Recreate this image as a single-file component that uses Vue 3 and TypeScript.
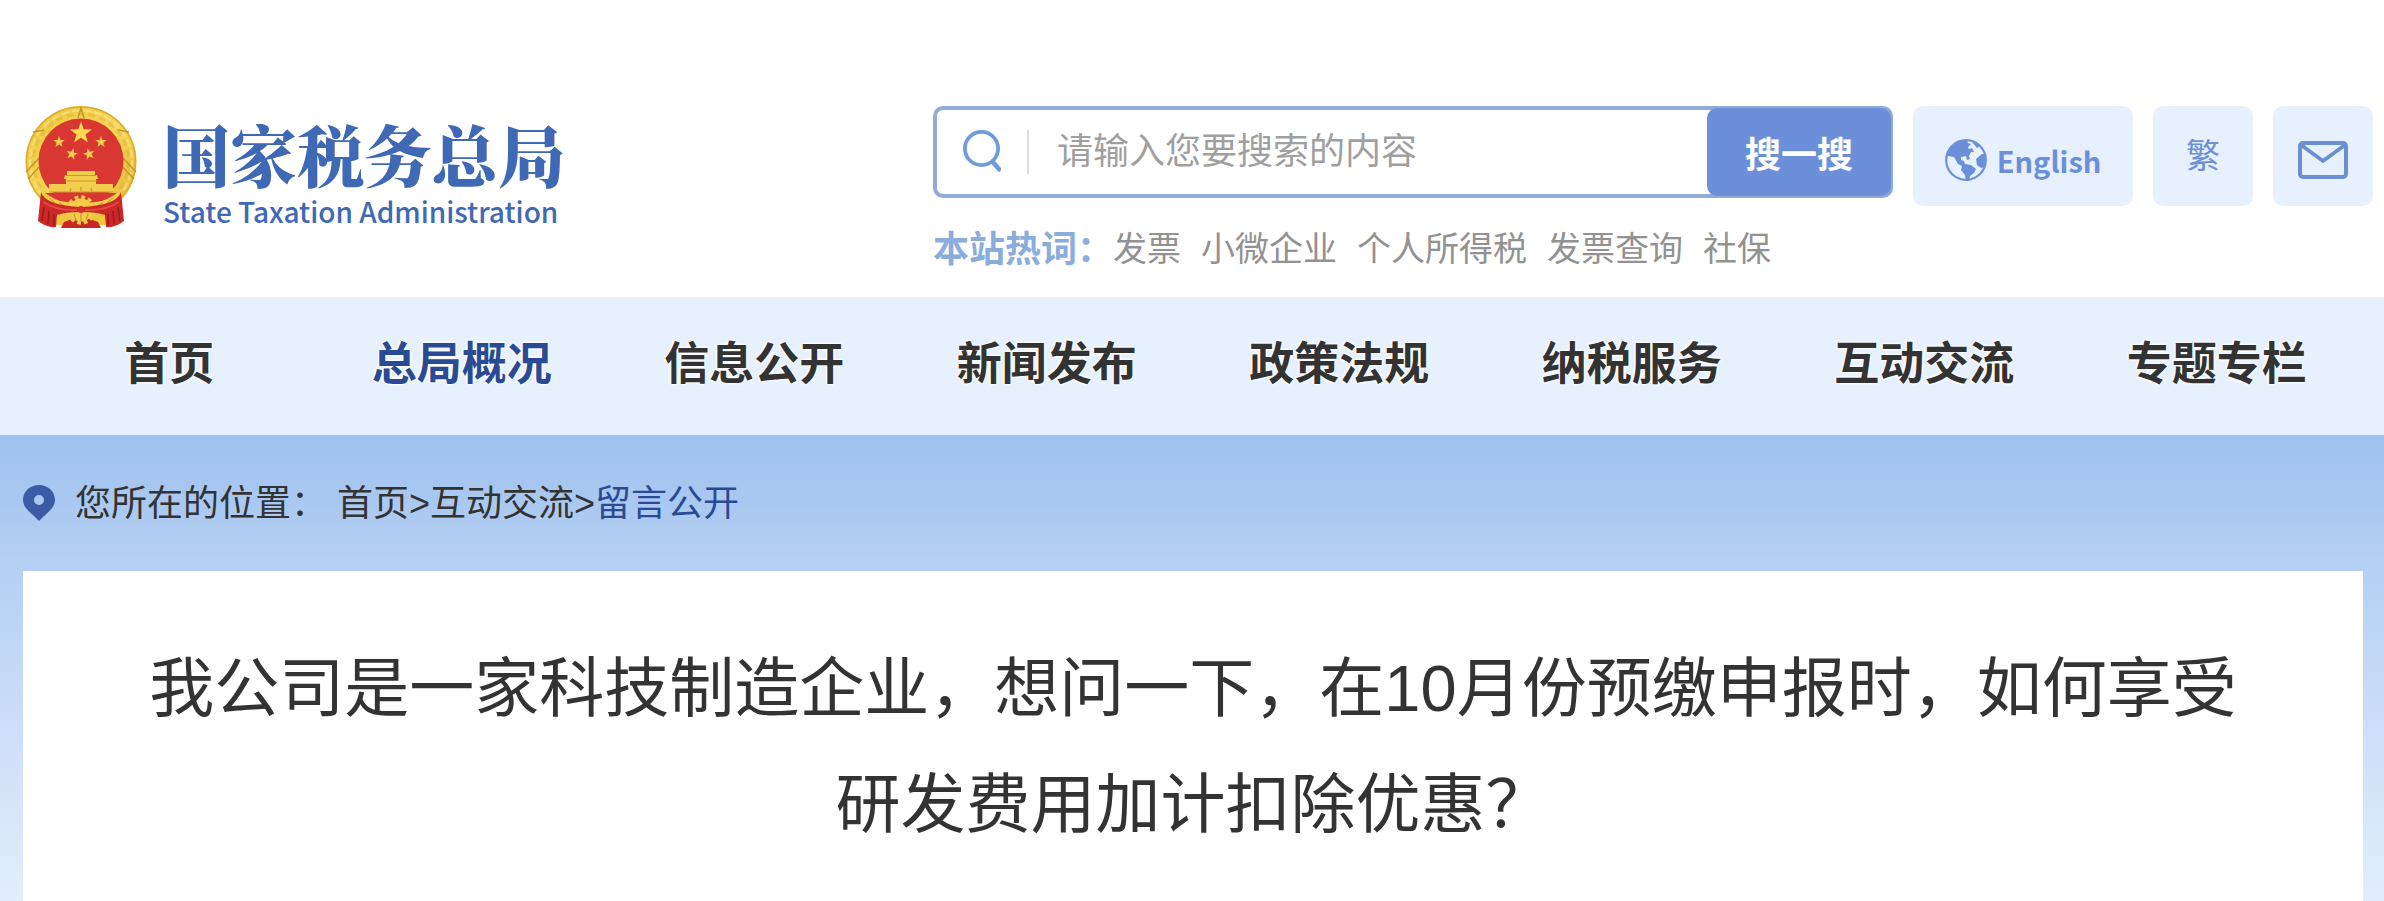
<script setup lang="ts">
import { ref } from 'vue'

interface NavItem {
  label: string
  active?: boolean
}

const keyword = ref('')
const hotWords: string[] = ['发票', '小微企业', '个人所得税', '发票查询', '社保']
const navItems: NavItem[] = [
  { label: '首页' },
  { label: '总局概况', active: true },
  { label: '信息公开' },
  { label: '新闻发布' },
  { label: '政策法规' },
  { label: '纳税服务' },
  { label: '互动交流' },
  { label: '专题专栏' },
]
const smallStars: string[] = [
  'translate(34 36)',
  'translate(76 36)',
  'translate(47 48) rotate(14)',
  'translate(64 48) rotate(-14)',
]
</script>

<template>
  <div class="page">
    <header class="header">
      <a class="brand" href="#">
        <svg class="emblem" viewBox="0 0 112 122" aria-hidden="true">
          <defs>
            <linearGradient id="gold" x1="0" y1="0" x2="1" y2="1">
              <stop offset="0" stop-color="#efc73e" />
              <stop offset="0.5" stop-color="#f6d657" />
              <stop offset="1" stop-color="#e8b733" />
            </linearGradient>
          </defs>
          <circle cx="56" cy="55.5" r="55.5" fill="url(#gold)" />
          <circle cx="56" cy="55.5" r="54.5" fill="none" stroke="#dcab30" stroke-width="1.5" />
          <circle cx="56" cy="55.5" r="47.5" fill="none" stroke="#cf9c2b" stroke-width="3" stroke-dasharray="7 4" opacity="0.3" />
          <circle cx="56" cy="55.5" r="51" fill="none" stroke="#fbe68a" stroke-width="2" stroke-dasharray="8 3" opacity="0.7" />
          <path d="M1 66 15 51M3 73 17 58M111 66 97 51M109 73 95 58M8 26 19 24M104 26 93 24M53 12 56 2 59 12" fill="none" stroke="#c8952e" stroke-width="1.5" />
          <circle cx="56" cy="55" r="42.5" fill="#d93832" />

          <path d="M0-11.5 2.8-3.8 11-3.6 4.5 1.5 6.8 9.3 0 4.7-6.8 9.3-4.5 1.5-11-3.6-2.8-3.8z" transform="translate(56 27)" fill="#f8d950" />
          <path
            v-for="place in smallStars"
            :key="place"
            d="M0-6 1.5-2 5.8-1.9 2.4.8 3.6 5 0 2.5-3.6 5-2.4.8-5.8-1.9-1.5-2z"
            :transform="place"
            fill="#f3cb4c"
          />

          <path d="M42 65h28v4h2l1 4h-2v5h17v8H24v-8h17v-5h-2l1-4h2z" fill="#f3cd4c" />
          <path d="M41 69.5h30M40 75h32M24 86h64" fill="none" stroke="#cd962f" stroke-width="1.2" />
          <path d="M46 82l-1 3M56 81v4M66 82l1 3" stroke="#cd962f" stroke-width="1.2" />
          <path d="M17 87h78L80 102H32z" fill="#d93832" />

          <path d="M30 106h52v13H30z" fill="#f0c640" />
          <path d="M36 122l3-6 8-3h18l8 3 3 6z" fill="#c92723" />
          <circle cx="56" cy="104" r="11.5" fill="#f3cc48" />
          <circle cx="56" cy="104" r="13" fill="none" stroke="#f3cc48" stroke-width="3.5" stroke-dasharray="3.8 3" />
          <path d="M49 108l2 6M56 107v8M63 108l-2 6" stroke="#cd962f" stroke-width="1.2" />

          <path d="M16 84Q22 89 30 93Q38 97 46 96L53 101Q30 105 16 92zM96 84Q90 89 82 93Q74 97 66 96L59 101Q82 105 96 92z" fill="#f3cc48" />
          <path d="M24 92l6 5M34 97l6 3M88 92l-6 5M78 97l-6 3" fill="none" stroke="#cd962f" stroke-width="1" />

          <path d="M16 86q4 13 38 15v5q-14 0-22 3l-1 12q-9 1-18-6z" fill="#cb2928" />
          <path d="M96 86q-4 13-38 15v5q14 0 22 3l1 12q9 1 18-6z" fill="#cb2928" />
          <path d="M18 96q14 9 34 8M94 96q-14 9-34 8" fill="none" stroke="#e34843" stroke-width="2" />
          <path d="M19 101l-2 14M24 105l-1 13M29 108v12M93 101l2 14M88 105l1 13M83 108v12" fill="none" stroke="#9b191c" stroke-width="1.5" />
          <circle cx="56" cy="103.5" r="3.5" fill="#d5302b" />
        </svg>
        <span class="brand-text">
          <span class="brand-cn">国家税务总局</span>
          <span class="brand-en">State Taxation Administration</span>
        </span>
      </a>

      <div class="search-area">
        <form class="search" @submit.prevent>
          <label class="search-label" for="keyword" aria-label="搜索">
            <svg class="search-icon" viewBox="0 0 38 42" aria-hidden="true">
              <circle cx="18.5" cy="18.5" r="16.6" fill="none" stroke="#6f9cda" stroke-width="3.8" />
              <path d="M29 31 37.5 41" stroke="#6f9cda" stroke-width="4.5" />
            </svg>
          </label>
          <input id="keyword" v-model="keyword" class="search-input" type="text" placeholder="请输入您要搜索的内容" />
          <button class="search-button" type="submit">搜一搜</button>
        </form>
        <div class="hot">
          <strong class="hot-label">本站热词：</strong>
          <a v-for="word in hotWords" :key="word" class="hot-link" href="#">{{ word }}</a>
        </div>
      </div>

      <div class="tools">
        <a class="tool tool-wide" href="#">
          <svg class="globe" viewBox="0 0 42 42" aria-hidden="true">
            <circle cx="21" cy="21" r="19.8" fill="none" stroke="#6b90d9" stroke-width="2.2" />
            <path d="M1 18C3 8 11 1 22 1l1 3 3 1-3 3 1 2 3-1 2 4-3 0-2 4 1 3-3 1-1-4-5 1 0 3 3 1 1 3 6 1 5 4-2 4-4 3-1 6-3 0-1-7-4-5 1-4-4-2-4-7-6-1z" fill="#6b90d9" />
            <path d="M41 15l-4 0-6 5 1 6 4 3 4-1z" fill="#6b90d9" />
            <path d="M27 3l3 0 5 4-3 2z" fill="#6b90d9" />
          </svg>
          <span>English</span>
        </a>
        <button class="tool tool-lang" type="button">繁</button>
        <a class="tool" href="#" aria-label="邮箱">
          <svg class="mail" viewBox="0 0 50 38" aria-hidden="true">
            <rect x="2" y="2" width="46" height="34" rx="3" fill="none" stroke="#6b8fd2" stroke-width="4" />
            <path d="M3 4 25 20 47 4" fill="none" stroke="#6b8fd2" stroke-width="3.8" />
          </svg>
        </a>
      </div>
    </header>

    <nav class="nav">
      <a v-for="item in navItems" :key="item.label" class="nav-link" :class="{ active: item.active }" href="#">{{ item.label }}</a>
    </nav>

    <main class="main">
      <div class="crumbs">
        <svg class="pin" viewBox="0 -6 32 42" aria-hidden="true">
          <path fill-rule="evenodd" d="M16 0C7 0 0 6.5 0 15c0 9 10 14 16 21 6-7 16-12 16-21C32 6.5 25 0 16 0zm0 10a5 5 0 1 1 0 10 5 5 0 0 1 0-10z" fill="#3b5ba5" />
        </svg>
        <span class="crumb-label">您所在的位置：</span>
        <span><a href="#">首页</a>&gt;<a href="#">互动交流</a>&gt;<a class="current" href="#">留言公开</a></span>
      </div>
      <article class="card">
        <h1 class="title">我公司是一家科技制造企业，想问一下，在10月份预缴申报时，如何享受研发费用加计扣除优惠？</h1>
      </article>
    </main>
  </div>
</template>

<style>
body {
  margin: 0;
  background: #fff;
}
</style>

<style scoped>
.page {
  display: flex;
  flex-direction: column;
  min-height: 100vh;
  color: #333;
  font-family: "Liberation Sans", "Noto Sans CJK SC", sans-serif;
  font-size: 36px;
}
a {
  color: inherit;
  text-decoration: none;
}
.header {
  display: flex;
  align-items: flex-start;
  padding: 106px 11px 23px 25px;
}
.brand {
  display: flex;
  gap: 26px;
  color: #3f68b5;
}
.emblem {
  width: 112px;
  height: 122px;
}
.brand-text {
  display: flex;
  flex-direction: column;
  padding-top: 9px;
}
.brand-cn {
  font-family: "Noto Serif CJK SC", "Source Han Serif SC", "Noto Sans CJK SC", serif;
  font-size: 67px;
  font-weight: 900;
  line-height: 76px;
}
.brand-en {
  font-family: "Noto Sans CJK SC", sans-serif;
  font-size: 28px;
  font-weight: 500;
  line-height: 40px;
}
.search-area {
  flex: none;
  width: 960px;
  margin-left: auto;
}
.search {
  display: flex;
  height: 88px;
  padding: 2px;
  border-radius: 10px;
  background: #fff;
  box-shadow: inset 0 0 0 4px #93aad8;
}
.search-label {
  display: flex;
  align-items: flex-start;
  flex: none;
  height: 44px;
  margin: 22px 0 0 28px;
  padding-right: 26px;
  border-right: 2px solid #ddd;
}
.search-icon {
  width: 38px;
  height: 42px;
}
.search-input {
  flex: 1;
  min-width: 0;
  margin: 4px 0;
  padding: 0 28px;
  border: 0;
  outline: 0;
  background: transparent;
  color: #333;
  font: inherit;
}
.search-input::placeholder {
  color: #9f9f9f;
  opacity: 1;
}
.search-button {
  flex: none;
  width: 184px;
  padding: 0;
  border: 0;
  border-radius: 10px;
  background: #6b90d9;
  color: #fff;
  font: inherit;
  font-weight: 700;
}
.hot {
  display: flex;
  align-items: center;
  gap: 20px;
  height: 52px;
  margin-top: 22px;
  color: #929292;
  font-size: 34px;
}
.hot-label {
  margin-right: -20px;
  color: #8badde;
  font-size: 36px;
}
.tools {
  display: flex;
  flex: none;
  gap: 20px;
  margin-left: 20px;
}
.tool {
  display: flex;
  align-items: center;
  justify-content: center;
  width: 100px;
  height: 100px;
  padding: 8px 0 0;
  box-sizing: border-box;
  border: 0;
  border-radius: 10px;
  background: #e7f1fe;
  color: #6b90d9;
  font: inherit;
}
.tool-wide {
  gap: 10px;
  width: 220px;
  font-family: "Noto Sans CJK SC", sans-serif;
  font-size: 29px;
  font-weight: 700;
}
.tool-lang {
  padding: 0 0 6px;
  font-size: 34px;
}
.globe {
  width: 42px;
  height: 42px;
}
.mail {
  width: 50px;
  height: 38px;
}
.nav {
  display: grid;
  grid-template-columns: repeat(8, 1fr);
  margin-top: 2px;
  padding: 0 21px 0 23px;
  background: #e7f1fe;
}
.nav-link {
  padding-bottom: 2px;
  font-size: 45px;
  font-weight: 700;
  line-height: 136px;
  text-align: center;
  text-shadow: 0 0 3px #fff, 0 0 3px #fff, 0 0 3px #fff;
}
.nav-link.active,
.current {
  color: #2a4b93;
}
.main {
  display: flex;
  flex: 1;
  flex-direction: column;
  padding: 0 21px 0 23px;
  background: linear-gradient(#9fc1ef, #b9d3f4 35%, #cfdff8 65%, #e2eefa);
}
.crumbs {
  display: flex;
  align-items: center;
  height: 136px;
  padding-bottom: 6px;
  box-sizing: border-box;
}
.pin {
  width: 32px;
  height: 42px;
  margin-right: 20px;
}
.crumb-label {
  margin-right: 10px;
}
.card {
  flex: 1;
  padding: 60px 120px 40px;
  background: #fff;
}
.title {
  margin: 0;
  font-size: 65px;
  font-weight: 400;
  line-height: 116px;
  text-align: center;
}
</style>
